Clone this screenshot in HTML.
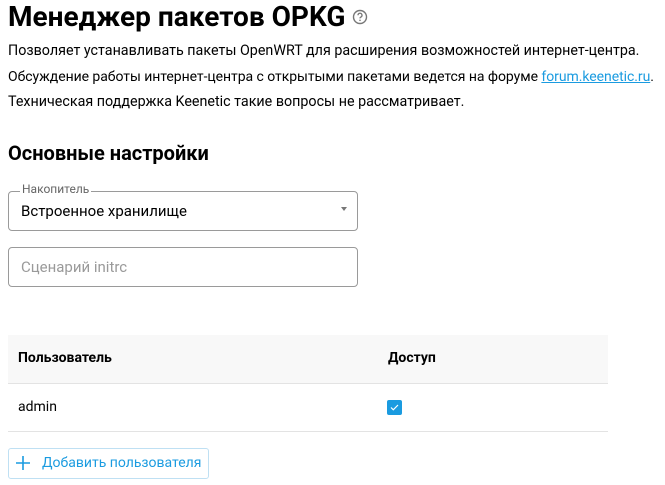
<!DOCTYPE html>
<html><head><meta charset="utf-8"><style>
body{margin:0;width:665px;height:485px;background:#fff;font-family:"Roboto","Liberation Sans",sans-serif;color:#000;position:relative;overflow:hidden}
.a{position:absolute;white-space:nowrap}
h1{position:absolute;left:8px;top:0px;margin:0;font-size:28px;font-weight:bold}
.p{font-size:14.3px;left:8px}
a{color:#1a9be0}
.box{position:absolute;left:8px;width:348px;height:38px;border:1px solid #9a9a9a;border-radius:4px}
</style></head><body>
<h1>Менеджер пакетов OPKG <svg width="16" height="16" viewBox="0 0 16 16" style="vertical-align:1px"><circle cx="8" cy="8" r="6.5" fill="none" stroke="#777" stroke-width="1.4"/><path d="M6 6.3a2 2 0 1 1 2.8 1.8c-.6.3-.8.6-.8 1.3" fill="none" stroke="#777" stroke-width="1.3"/><circle cx="8" cy="11.3" r=".8" fill="#777"/></svg></h1>
<div class="a p" style="top:43px">Позволяет устанавливать пакеты OpenWRT для расширения возможностей интернет-центра.</div>
<div class="a p" style="top:69px;font-size:14px;letter-spacing:-0.05px">Обсуждение работы интернет-центра с открытыми пакетами ведется на форуме <a href="#">forum.keenetic.ru</a>.</div>
<div class="a p" style="top:94px">Техническая поддержка Keenetic такие вопросы не рассматривает.</div>
<div class="a" style="left:8px;top:141px;font-size:20px;font-weight:bold">Основные настройки</div>
<div class="box" style="top:191px"></div>
<div class="a" style="left:20px;top:182px;font-size:12px;color:#666;background:#fff;padding:0 2px">Накопитель</div>
<div class="a" style="left:21px;top:202px;font-size:15px">Встроенное хранилище</div>
<div class="a" style="left:341px;top:207px;width:0;height:0;border-left:3px solid transparent;border-right:3px solid transparent;border-top:4px solid #777"></div>
<div class="box" style="top:247px"></div>
<div class="a" style="left:21px;top:258px;font-size:15px;color:#9a9a9a">Сценарий initrc</div>
<div class="a" style="left:8px;top:335px;width:600px;height:48px;background:#f8f8f8;border-bottom:1px solid #e3e3e3"></div>
<div class="a" style="left:18px;top:350px;font-size:14px;font-weight:bold">Пользователь</div>
<div class="a" style="left:388px;top:350px;font-size:14px;font-weight:bold">Доступ</div>
<div class="a" style="left:18px;top:399px;font-size:14px">admin</div>
<div class="a" style="left:387px;top:400px;width:15px;height:15px;background:#1a9be0;border-radius:2px"><svg width="15" height="15"><path d="M4 7.5l2.3 2.3L11 5" fill="none" stroke="#fff" stroke-width="1.2"/></svg></div>
<div class="a" style="left:8px;top:431px;width:600px;height:1px;background:#e3e3e3"></div>
<div class="a" style="left:8px;top:448px;width:199px;height:29px;border:1px solid #bfe0f3;border-radius:3px"></div>
<svg class="a" style="left:15px;top:455px" width="16" height="16"><path d="M8 1v14M1 8h14" stroke="#1a9be0" stroke-width="1.6"/></svg>
<div class="a" style="left:42px;top:455px;font-size:14px;color:#1a9be0">Добавить пользователя</div>
</body></html>
